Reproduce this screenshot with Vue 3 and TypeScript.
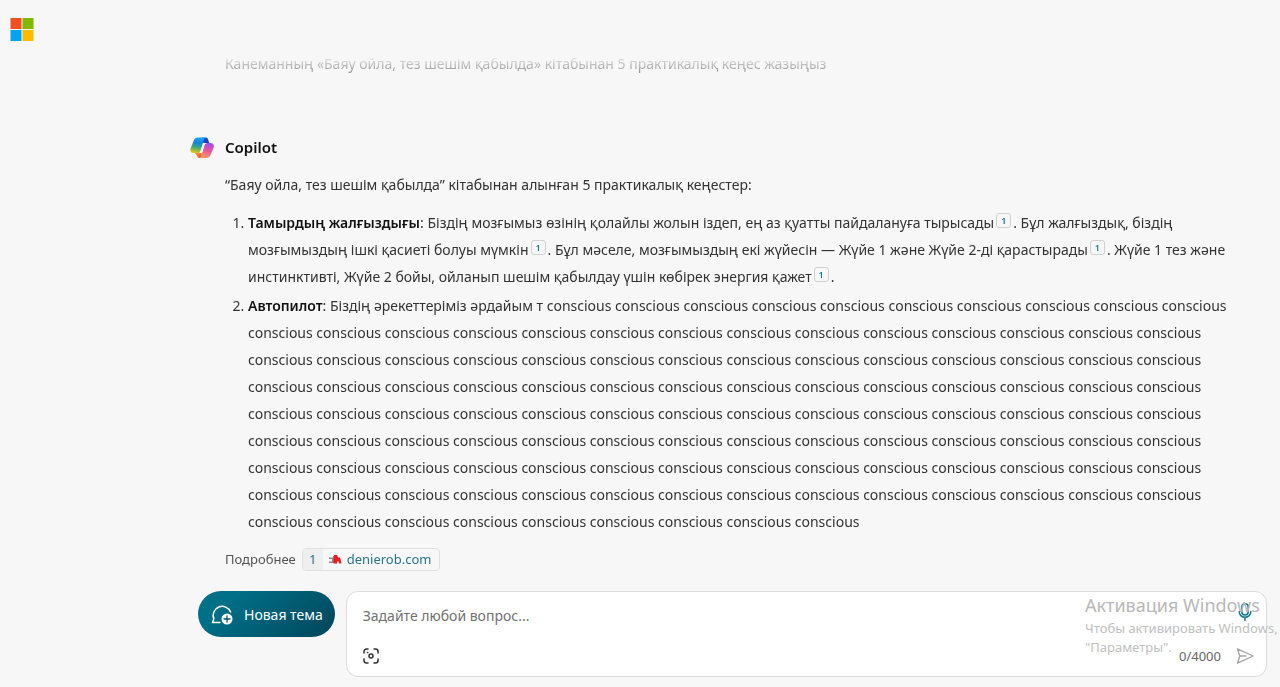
<script setup lang="ts">
import { ref } from 'vue'

interface Run {
  text?: string
  cite?: number
}
interface Tip {
  title: string
  lines: Run[][]
}

const word = 'conscious'
const words = (n: number): string => Array(n).fill(word).join(' ')

const tips: Tip[] = [
  {
    title: 'Тамырдың жалғыздығы',
    lines: [
      [
        { text: ': Біздің мозғымыз өзінің қолайлы жолын іздеп, ең аз қуатты пайдалануға тырысады' },
        { cite: 1 },
        { text: '. Бұл жалғыздық, біздің' },
      ],
      [
        { text: 'мозғымыздың ішкі қасиеті болуы мүмкін' },
        { cite: 1 },
        { text: '. Бұл мәселе, мозғымыздың екі жүйесін — Жүйе 1 және Жүйе 2-ді қарастырады' },
        { cite: 1 },
        { text: '. Жүйе 1 тез және' },
      ],
      [
        { text: 'инстинктивті, Жүйе 2 бойы, ойланып шешім қабылдау үшін көбірек энергия қажет' },
        { cite: 1 },
        { text: '.' },
      ],
    ],
  },
  {
    title: 'Автопилот',
    lines: [
      [{ text: ': Біздің әрекеттеріміз әрдайым т ' + words(10) }],
      ...Array.from({ length: 7 }, () => [{ text: words(14) }]),
      [{ text: words(9) }],
    ],
  },
]

const question = ref('')
const limit = 4000
</script>

<template>
  <div class="page">
    <header class="top">
      <svg class="ms" viewBox="0 0 24 24" role="img" aria-label="Microsoft">
        <rect x="0.500" y="0" width="11" height="11" fill="#f25022" />
        <rect x="12.500" y="0" width="11" height="11" fill="#7fba00" />
        <rect x="0.500" y="12" width="11" height="11" fill="#00a4ef" />
        <rect x="12.500" y="12" width="11" height="11" fill="#ffb900" />
      </svg>
    </header>

    <main class="chat">
      <p class="user">Канеманның «Баяу ойла, тез шешім қабылда» кітабынан 5 практикалық кеңес жазыңыз</p>

      <article class="answer">
        <div class="author">
          <svg class="logo" viewBox="0 0 24 24" aria-hidden="true">
            <defs>
              <linearGradient id="cp-left" x1="0.5" y1="0" x2="0.3" y2="1">
                <stop offset="0" stop-color="#1ba4f4" />
                <stop offset="0.35" stop-color="#1583d8" />
                <stop offset="0.65" stop-color="#3fae72" />
                <stop offset="1" stop-color="#f2c50f" />
              </linearGradient>
              <linearGradient id="cp-right" x1="0.7" y1="0" x2="0.4" y2="1">
                <stop offset="0" stop-color="#9a4df0" />
                <stop offset="0.5" stop-color="#e8559b" />
                <stop offset="1" stop-color="#ff9a62" />
              </linearGradient>
              <linearGradient id="cp-top" x1="0" y1="0" x2="1" y2="1">
                <stop offset="0" stop-color="#1c5fd6" />
                <stop offset="1" stop-color="#1b35b8" />
              </linearGradient>
              <linearGradient id="cp-bottom" x1="0" y1="0" x2="1" y2="1">
                <stop offset="0" stop-color="#f7a23b" />
                <stop offset="1" stop-color="#e8452f" />
              </linearGradient>
            </defs>
            <path d="M12 1.500h3.500c1.600 0 2.300.9 2.700 2.200l1 3.300h-6z" fill="url(#cp-top)" />
            <path d="M4.500 16.500h7L12.500 22H10c-1.600 0-2.600-.8-3-2.200z" fill="url(#cp-bottom)" />
            <path d="M7.800 1.500h8.700c-1.500.1-2.200 1-2.700 2.600L10.500 14.400c-.6 2-1.700 2.700-3.500 2.700H3.500C1 17.100-.1 15.300.5 12.800L3.800 4.500C4.500 2.500 5.800 1.500 7.800 1.500z" fill="url(#cp-left)" />
            <path d="M16.500 22H8.800c1.500-.1 2.200-1 2.700-2.600l2.400-9.800c.6-2 1.700-2.700 3.500-2.700h3.200c2.500 0 3.700 1.800 3.200 4.300L20.500 19c-.6 2-2 3-4 3z" fill="url(#cp-right)" />
            <path d="M14.200 7H17c-1.500.2-2 1-2.500 2.500l-1.800 5.700c-.5 1.400-1.200 1.800-2.700 1.800H8.800c1.200-.3 1.700-1 2.200-2.500l1.700-5.500C13 7.800 13.400 7.200 14.200 7z" fill="#f7f7f7" />
          </svg>
          <h2>Copilot</h2>
        </div>

        <div class="body">
          <p>“Баяу ойла, тез шешім қабылда” кітабынан алынған 5 практикалық кеңестер:</p>
          <ol>
            <li v-for="tip in tips" :key="tip.title">
              <strong>{{ tip.title }}</strong><template v-for="(line, i) in tip.lines" :key="i"><br v-if="i > 0" /><template v-for="(run, j) in line" :key="j"><a v-if="run.cite" class="cite" href="#source-1">{{ run.cite }}</a><template v-else>{{ run.text }}</template></template></template>
            </li>
          </ol>
          <div class="more">
            <span>Подробнее</span>
            <a id="source-1" class="source" href="#source-1">
              <span class="num">1</span>
              <svg class="fav" viewBox="0 0 14 12" aria-hidden="true">
                <path d="M1 3.500h4V2h2v7H1V7.500h3V5H1z" fill="#8a8a8a" />
                <path d="M6 1h3l1 2.500h2l1.500 6h-2.500V7.500H9V9.500H5.500V6z" fill="#f01820" />
              </svg>
              <span>denierob.com</span>
            </a>
          </div>
        </div>
      </article>
    </main>

    <footer class="bar">
      <button type="button" class="new">
        <svg viewBox="0 0 24 24" aria-hidden="true">
          <path d="M10 20.500H2.500l1.300-3.600A9 9 0 1 1 20.600 10" fill="none" stroke="#fff" stroke-width="1.500" stroke-linecap="round" stroke-linejoin="round" />
          <circle cx="17" cy="17" r="5.500" fill="#fff" />
          <path d="M17 14v6M14 17h6" stroke="#00566b" stroke-width="1.300" stroke-linecap="round" />
        </svg>
        <span>Новая тема</span>
      </button>

      <form class="box" @submit.prevent>
        <div class="line first">
          <textarea v-model="question" rows="1" :maxlength="limit" aria-label="Задайте любой вопрос" placeholder="Задайте любой вопрос..."></textarea>
          <button type="button" class="icon" aria-label="Микрофон">
            <svg viewBox="0 0 20 20" fill="none" stroke="#127a93" stroke-width="1.500" stroke-linecap="round" aria-hidden="true">
              <rect x="6.800" y="1.700" width="6.400" height="11.300" rx="3.200" />
              <path d="M4.200 9.500a5.800 5.800 0 0 0 11.600 0M10 15.500v3" />
            </svg>
          </button>
        </div>
        <div class="line">
          <button type="button" class="icon" aria-label="Добавить изображение">
            <svg viewBox="0 0 20 20" fill="none" stroke="#333" stroke-width="1.500" stroke-linecap="round" aria-hidden="true">
              <path d="M3 7V5.500A2.500 2.500 0 0 1 5.500 3H7M13 3h1.500A2.500 2.500 0 0 1 17 5.500V7M17 13v1.500a2.500 2.500 0 0 1-2.500 2.500H13M7 17H5.500A2.500 2.500 0 0 1 3 14.500V13" />
              <circle cx="10" cy="10" r="2" />
              <circle cx="6.500" cy="6.500" r="0.400" fill="#333" stroke-width="0.800" />
            </svg>
          </button>
          <span class="count">{{ question.length }}/{{ limit }}</span>
          <button type="submit" class="icon" aria-label="Отправить">
            <svg viewBox="0 0 20 20" fill="none" stroke="#a3a3a3" stroke-width="1.300" stroke-linejoin="round" aria-hidden="true">
              <path d="M2.500 2.800L18 10 2.500 17.200 4.800 10zM4.800 10H11" stroke-linecap="round" />
            </svg>
          </button>
        </div>
      </form>
    </footer>

    <aside class="activation">
      <strong>Активация Windows</strong>
      <span>Чтобы активировать Windows,</span>
      <span>"Параметры".</span>
    </aside>
  </div>
</template>

<style>
body {
  margin: 0;
  background: #f7f7f7;
}
</style>

<style scoped>
.page {
  position: relative;
  display: flex;
  flex-direction: column;
  box-sizing: border-box;
  min-height: 100vh;
  overflow: hidden;
  font-family: 'Noto Sans', 'Open Sans', sans-serif;
  font-size: 14px;
  line-height: 27px;
  color: #333;
}
.top {
  height: 40px;
  padding: 18px 10px 0;
}
.ms {
  display: block;
  width: 24px;
  height: 24px;
}
.chat {
  flex: 1;
  padding: 0 24px 0 190px;
  overflow: hidden;
  mask-image: linear-gradient(to bottom, rgba(0, 0, 0, 0.1), #000 32px);
}
.user {
  margin: -8px 0 0 35px;
}
.answer {
  margin-top: 57px;
}
.author {
  display: flex;
  align-items: center;
  gap: 11px;
  height: 27px;
}
.logo {
  width: 24px;
  height: 24px;
}
h2 {
  margin: 0;
  font-size: 15px;
  font-weight: 600;
  color: #111;
}
.body {
  padding-left: 35px;
}
p {
  margin: 10px 0 0;
}
ol {
  margin: 11px 0 0;
  padding-left: 23px;
}
li {
  white-space: nowrap;
}
li + li {
  margin-top: 2px;
}
strong {
  font-weight: 600;
  color: #111;
}
.cite {
  display: inline-block;
  box-sizing: border-box;
  width: 15px;
  height: 15px;
  margin: 0 2px;
  border: 1px solid #d0d0d0;
  border-radius: 3px;
  font-size: 9px;
  font-weight: 600;
  line-height: 13px;
  text-align: center;
  text-decoration: none;
  vertical-align: 4px;
  color: #127a93;
}
.more {
  display: flex;
  align-items: center;
  gap: 6px;
  height: 23px;
  margin-top: 13px;
  font-size: 13px;
  color: #555;
}
.source {
  display: flex;
  align-items: center;
  box-sizing: border-box;
  height: 23px;
  padding-right: 8px;
  border: 1px solid #e0e0e0;
  border-radius: 4px;
  overflow: hidden;
  text-decoration: none;
  color: #2b7489;
}
.num {
  width: 20px;
  background: #efefef;
  text-align: center;
}
.fav {
  width: 14px;
  height: 12px;
  margin: 0 5px;
}
.bar {
  display: flex;
  align-items: flex-start;
  gap: 11px;
  padding: 20px 13px 11px 198px;
}
button {
  border: 0;
  cursor: pointer;
  font: inherit;
}
.new {
  display: flex;
  align-items: center;
  gap: 10px;
  height: 46px;
  padding: 0 12px;
  border-radius: 23px;
  background: linear-gradient(135deg, #007088 20%, #004b60 90%);
  color: #fff;
  white-space: nowrap;
}
.new svg {
  width: 24px;
  height: 24px;
}
.box {
  display: flex;
  flex: 1;
  flex-direction: column;
  justify-content: space-between;
  box-sizing: border-box;
  height: 86px;
  padding: 10px 9px 10px 12px;
  border: 1px solid #dcdcdc;
  border-radius: 12px;
  background: #fff;
}
.line {
  display: flex;
  align-items: center;
}
.first {
  align-items: flex-start;
}
textarea {
  flex: 1;
  height: 27px;
  padding: 0 4px;
  border: 0;
  outline: 0;
  resize: none;
  overflow: hidden;
  background: none;
  font: inherit;
  color: #333;
}
textarea::placeholder {
  color: #717171;
  opacity: 1;
}
.icon {
  display: flex;
  padding: 0 2px;
  background: none;
}
.icon svg {
  width: 20px;
  height: 20px;
}
.count {
  margin: 0 12px 0 auto;
  font-size: 13px;
  line-height: 20px;
  color: #666;
}
.activation {
  position: absolute;
  right: 0;
  bottom: 31px;
  display: flex;
  flex-direction: column;
  width: 195px;
  font-size: 13px;
  line-height: 19px;
  white-space: nowrap;
  pointer-events: none;
  color: #c0c0c0;
}
.activation strong {
  font-size: 18px;
  font-weight: 400;
  line-height: 27px;
  color: #b8b8b8;
}
</style>
